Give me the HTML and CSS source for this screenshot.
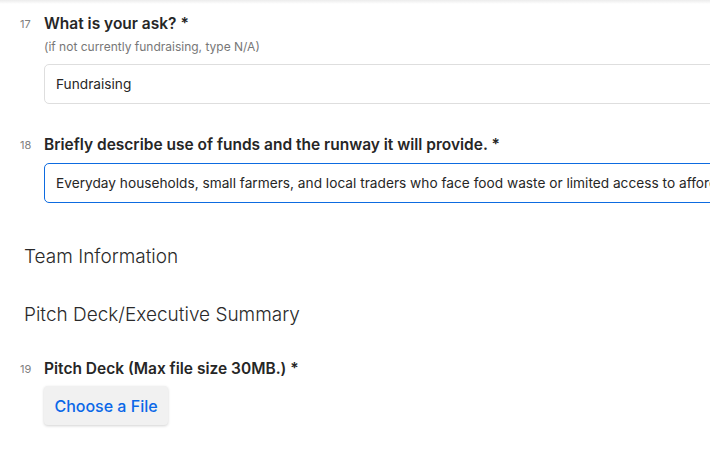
FILE: index.html
```html
<!DOCTYPE html>
<html>
<head>
<meta charset="utf-8">
<link rel="stylesheet" href="styles.css">
</head>
<body>
<div class="topshade"></div>
<main class="form">
  <section class="question q17">
    <div class="qhead">
      <span class="num">17</span>
      <span class="label">What is your ask? *</span>
    </div>
    <div class="hint">(if not currently fundraising, type N/A)</div>
    <div class="field">Fundraising</div>
  </section>

  <section class="question q18">
    <div class="qhead">
      <span class="num">18</span>
      <span class="label">Briefly describe use of funds and the runway it will provide. *</span>
    </div>
    <div class="field focused">Everyday households, small farmers, and local traders who face food waste or limited access to affordable food options</div>
  </section>

  <h2 class="section-title team">Team Information</h2>
  <h2 class="section-title deck">Pitch Deck/Executive Summary</h2>

  <section class="question q19">
    <div class="qhead">
      <span class="num">19</span>
      <span class="label">Pitch Deck (Max file size 30MB.) *</span>
    </div>
    <button class="filebtn">Choose a File</button>
  </section>
</main>
</body>
</html>
```

FILE: styles.css
```css
html, body {
  margin: 0;
  padding: 0;
  background: #ffffff;
  overflow: hidden;
  width: 710px;
  height: 452px;
}
body {
  font-family: Inter, "Noto Sans", "Liberation Sans", sans-serif;
  color: #262626;
  position: relative;
}
.topshade {
  position: absolute;
  left: 0;
  top: 0;
  width: 100%;
  height: 4px;
  background: linear-gradient(#ececec, rgba(255,255,255,0));
}
.form {
  padding: 13px 0 0 0;
  display: flex;
  flex-direction: column;
}
.question {
  display: flex;
  flex-direction: column;
  padding-left: 44px;
}
.qhead {
  position: relative;
  display: flex;
  align-items: baseline;
  height: 22px;
}
.num {
  position: absolute;
  left: -24px;
  top: 5px;
  font-size: 11px;
  color: #808080;
  line-height: 12px;
}
.label {
  font-size: 15.5px;
  font-weight: 600;
  line-height: 22px;
  color: #262626;
  white-space: nowrap;
}
.hint {
  font-size: 12px;
  color: #777;
  line-height: 16px;
  margin-top: 4px;
}
.field {
  box-sizing: border-box;
  width: 720px;
  height: 40px;
  margin-top: 9px;
  border: 1px solid #dedede;
  border-radius: 5px;
  padding: 0 11px;
  display: flex;
  align-items: center;
  font-size: 13.7px;
  color: #262626;
  white-space: nowrap;
  overflow: hidden;
}
.field.focused {
  border: 1.5px solid #0d6be0;
  margin-top: 7px;
}
.q18 { margin-top: 30px; }
.section-title {
  margin: 0;
  padding-left: 24px;
  font-size: 19px;
  font-weight: 300;
  color: #2a2a2a;
  line-height: 26px;
}
.team { margin-top: 41px; }
.deck { margin-top: 32px; }
.q19 { margin-top: 30px; }
.filebtn {
  align-self: flex-start;
  margin-top: 6px;
  width: 124px;
  height: 39px;
  border: none;
  border-radius: 4px;
  background: #f1f1f1;
  box-shadow: 0 1px 3px rgba(0,0,0,0.18);
  font-family: Inter, "Noto Sans", "Liberation Sans", sans-serif;
  font-size: 16px;
  font-weight: 500;
  color: #0b68e8;
  padding: 0;
}
```
